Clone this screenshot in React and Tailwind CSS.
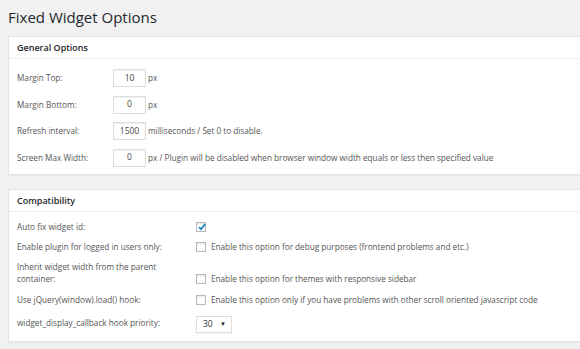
import React from 'react'

const font = { fontFamily: '"Open Sans", "Liberation Sans", sans-serif' }

function TextBox({ value }) {
  return (
    <div className="flex h-[18px] w-[33px] items-center justify-center border border-[#dddddd] bg-white text-[8.5px] text-[#444] shadow-[inset_0_1px_2px_rgba(0,0,0,0.07)]">
      {value}
    </div>
  )
}

function Check({ checked }) {
  return (
    <div className="relative h-[10px] w-[10px] shrink-0 border border-[#b4b9be] bg-white shadow-[inset_0_1px_2px_rgba(0,0,0,0.1)]">
      {checked && (
        <svg viewBox="0 0 10 10" className="absolute left-[0px] top-[-1px] h-[10px] w-[10px]">
          <path d="M2 5.2 L4 7.2 L8.2 2.2" fill="none" stroke="#1e8cbe" strokeWidth="1.8" />
        </svg>
      )}
    </div>
  )
}

function Panel({ title, children }) {
  return (
    <div className="mr-[-20px] border border-[#e5e5e5] bg-white shadow-[0_1px_1px_rgba(0,0,0,0.04)]">
      <div className="flex h-[22px] items-center border-b border-[#eeeeee] pl-[8px] text-[9px] font-semibold text-[#23282d]">
        {title}
      </div>
      {children}
    </div>
  )
}

function GeneralRow({ label, value, note }) {
  return (
    <div className="flex h-[26.5px] items-center">
      <div className="w-[104px] pl-[8px]">{label}</div>
      <TextBox value={value} />
      <span className="ml-[2px]">{note}</span>
    </div>
  )
}

export default function App() {
  return (
    <div style={font} className="h-[349px] w-[580px] overflow-hidden bg-[#f1f1f1] text-[8.2px] text-[#555]">
      <div className="pl-[8px]">
        <h1 className="flex h-[36px] items-center pb-[1px] text-[15px] font-normal text-[#23282d]">
          Fixed Widget Options
        </h1>

        <Panel title="General Options">
          <div className="pb-[3px] pt-[6px]">
            <GeneralRow label="Margin Top:" value="10" note="px" />
            <GeneralRow label="Margin Bottom:" value="0" note="px" />
            <GeneralRow label="Refresh interval:" value="1500" note="milliseconds / Set 0 to disable." />
            <GeneralRow
              label="Screen Max Width:"
              value="0"
              note="px / Plugin will be disabled when browser window width equals or less then specified value"
            />
          </div>
        </Panel>

        <div className="h-[14px]" />

        <Panel title="Compatibility">
          <div className="pb-[5px] pt-[5px]">
            <div className="flex h-[20px] items-center">
              <div className="w-[187px] pl-[8px]">Auto fix widget id:</div>
              <Check checked />
            </div>
            <div className="flex h-[20px] items-center">
              <div className="w-[187px] pl-[8px]">Enable plugin for logged in users only:</div>
              <Check />
              <span className="ml-[5px]">Enable this option for debug purposes (frontend problems and etc.)</span>
            </div>
            <div className="flex h-[33px]">
              <div className="w-[187px] pl-[8px] pr-[20px] pt-[4px] leading-[12px]">
                Inherit widget width from the parent container:
              </div>
              <div className="flex items-end pb-[5px]">
                <div className="flex items-center">
                  <Check />
                  <span className="ml-[5px]">Enable this option for themes with responsive sidebar</span>
                </div>
              </div>
            </div>
            <div className="flex h-[20px] items-center">
              <div className="w-[187px] pl-[8px]">Use jQuery(window).load() hook:</div>
              <Check />
              <span className="ml-[5px]">
                Enable this option only if you have problems with other scroll oriented javascript code
              </span>
            </div>
            <div className="flex h-[26px] items-center">
              <div className="w-[187px] pl-[8px]">widget_display_callback hook priority:</div>
              <div className="mt-[2px] flex h-[17px] w-[36px] items-center justify-between border border-[#dddddd] bg-white pl-[6px] pr-[5px] text-[8.5px] text-[#333] shadow-[0_1px_1px_rgba(0,0,0,0.04)]">
                <span>30</span>
                <span className="text-[6px] text-[#222]">▼</span>
              </div>
            </div>
          </div>
        </Panel>
      </div>
    </div>
  )
}
